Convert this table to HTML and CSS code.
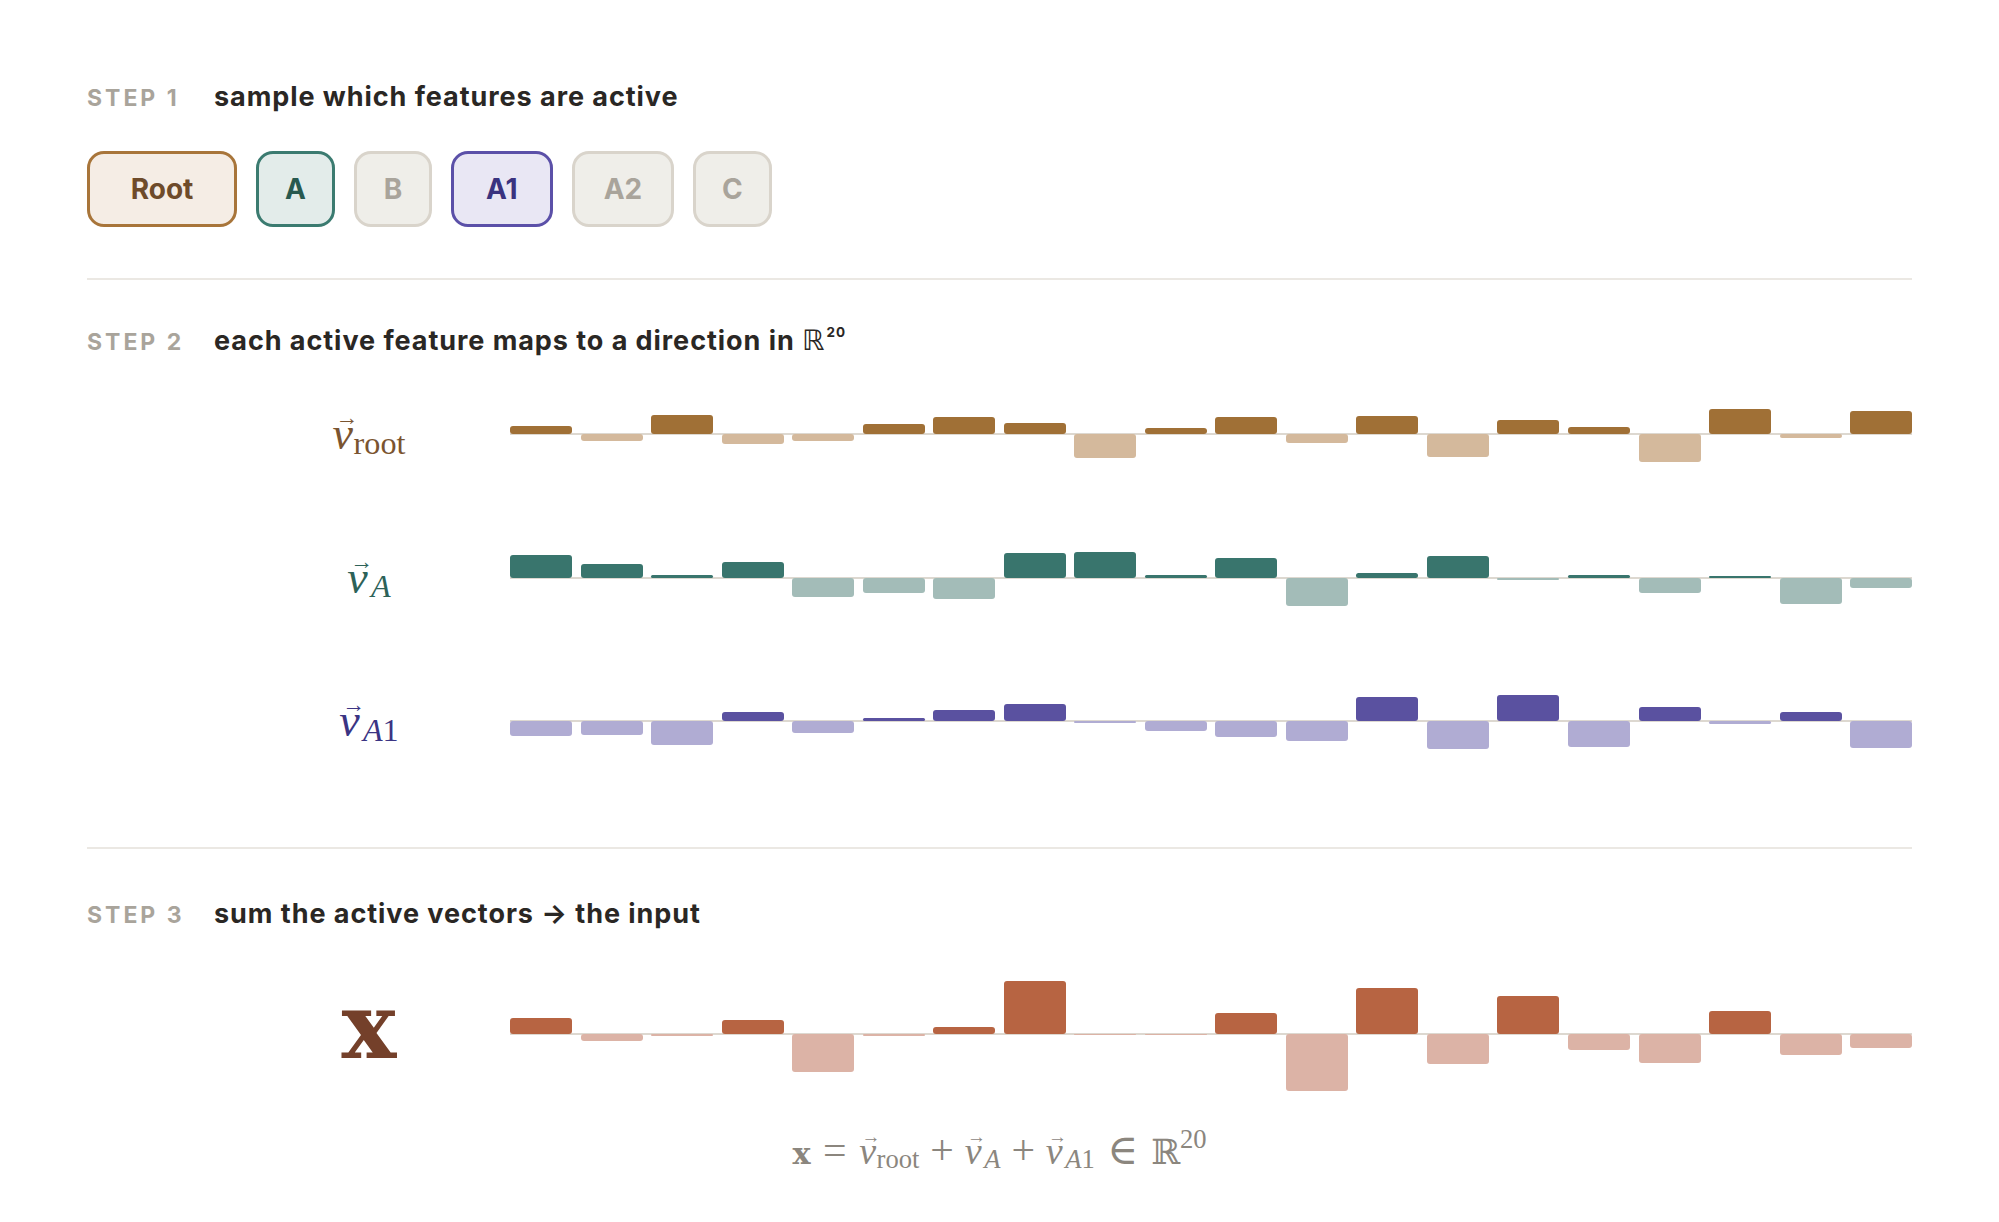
FILE: index.html
```html
<!DOCTYPE html>
<html lang="en">
<head>
<meta charset="utf-8">
<title>Feature sampling</title>
<link rel="stylesheet" href="styles.css">
</head>
<body>
<main class="page">
  <section class="step step-1">
    <h2 class="step-head"><span class="step-num">STEP 1</span><span class="step-title">sample which features are active</span></h2>
    <div class="chips">
      <span class="chip chip-wide chip-root">Root</span>
      <span class="chip chip-a">A</span>
      <span class="chip chip-off">B</span>
      <span class="chip chip-mid chip-a1">A1</span>
      <span class="chip chip-mid chip-off">A2</span>
      <span class="chip chip-off">C</span>
    </div>
  </section>

  <section class="step step-2">
    <h2 class="step-head"><span class="step-num">STEP 2</span><span class="step-title">each active feature maps to a direction in <span class="bb-sans">ℝ</span><sup>20</sup></span></h2>
    <div class="rows">
      <div class="row c-root">
        <div class="lab math"><span class="vec">v</span><sub>root</sub></div>
        <div class="bars">
          <div class="slot"><i class="up" style="height:8.3px"></i></div>
          <div class="slot"><i class="dn" style="height:7px"></i></div>
          <div class="slot"><i class="up" style="height:18.7px"></i></div>
          <div class="slot"><i class="dn" style="height:10.3px"></i></div>
          <div class="slot"><i class="dn" style="height:6.7px"></i></div>
          <div class="slot"><i class="up" style="height:10px"></i></div>
          <div class="slot"><i class="up" style="height:17.3px"></i></div>
          <div class="slot"><i class="up" style="height:11.3px"></i></div>
          <div class="slot"><i class="dn" style="height:24px"></i></div>
          <div class="slot"><i class="up" style="height:6.3px"></i></div>
          <div class="slot"><i class="up" style="height:17.3px"></i></div>
          <div class="slot"><i class="dn" style="height:9px"></i></div>
          <div class="slot"><i class="up" style="height:17.7px"></i></div>
          <div class="slot"><i class="dn" style="height:23.3px"></i></div>
          <div class="slot"><i class="up" style="height:13.7px"></i></div>
          <div class="slot"><i class="up" style="height:7.3px"></i></div>
          <div class="slot"><i class="dn" style="height:27.7px"></i></div>
          <div class="slot"><i class="up" style="height:25px"></i></div>
          <div class="slot"><i class="dn" style="height:3.7px"></i></div>
          <div class="slot"><i class="up" style="height:22.7px"></i></div>
        </div>
      </div>

      <div class="row c-a">
        <div class="lab math"><span class="vec">v</span><sub><i>A</i></sub></div>
        <div class="bars">
          <div class="slot"><i class="up" style="height:22.3px"></i></div>
          <div class="slot"><i class="up" style="height:14px"></i></div>
          <div class="slot"><i class="up" style="height:2.7px"></i></div>
          <div class="slot"><i class="up" style="height:15.3px"></i></div>
          <div class="slot"><i class="dn" style="height:19.7px"></i></div>
          <div class="slot"><i class="dn" style="height:15px"></i></div>
          <div class="slot"><i class="dn" style="height:21.7px"></i></div>
          <div class="slot"><i class="up" style="height:24.3px"></i></div>
          <div class="slot"><i class="up" style="height:25.3px"></i></div>
          <div class="slot"><i class="up" style="height:3px"></i></div>
          <div class="slot"><i class="up" style="height:20px"></i></div>
          <div class="slot"><i class="dn" style="height:28.3px"></i></div>
          <div class="slot"><i class="up" style="height:4.3px"></i></div>
          <div class="slot"><i class="up" style="height:21.7px"></i></div>
          <div class="slot"><i class="dn" style="height:2.3px"></i></div>
          <div class="slot"><i class="up" style="height:3px"></i></div>
          <div class="slot"><i class="dn" style="height:15.3px"></i></div>
          <div class="slot"><i class="up" style="height:1.7px"></i></div>
          <div class="slot"><i class="dn" style="height:26px"></i></div>
          <div class="slot"><i class="dn" style="height:10px"></i></div>
        </div>
      </div>

      <div class="row c-a1">
        <div class="lab math"><span class="vec">v</span><sub><i>A</i>1</sub></div>
        <div class="bars">
          <div class="slot"><i class="dn" style="height:15px"></i></div>
          <div class="slot"><i class="dn" style="height:14.3px"></i></div>
          <div class="slot"><i class="dn" style="height:23.7px"></i></div>
          <div class="slot"><i class="up" style="height:9.3px"></i></div>
          <div class="slot"><i class="dn" style="height:11.7px"></i></div>
          <div class="slot"><i class="up" style="height:2.7px"></i></div>
          <div class="slot"><i class="up" style="height:11px"></i></div>
          <div class="slot"><i class="up" style="height:17px"></i></div>
          <div class="slot"><i class="dn" style="height:2.3px"></i></div>
          <div class="slot"><i class="dn" style="height:10px"></i></div>
          <div class="slot"><i class="dn" style="height:16px"></i></div>
          <div class="slot"><i class="dn" style="height:19.7px"></i></div>
          <div class="slot"><i class="up" style="height:24px"></i></div>
          <div class="slot"><i class="dn" style="height:28px"></i></div>
          <div class="slot"><i class="up" style="height:26px"></i></div>
          <div class="slot"><i class="dn" style="height:26.3px"></i></div>
          <div class="slot"><i class="up" style="height:14px"></i></div>
          <div class="slot"><i class="dn" style="height:3px"></i></div>
          <div class="slot"><i class="up" style="height:8.7px"></i></div>
          <div class="slot"><i class="dn" style="height:27px"></i></div>
        </div>
      </div>
    </div>
  </section>

  <section class="step step-3">
    <h2 class="step-head"><span class="step-num">STEP 3</span><span class="step-title">sum the active vectors → the input</span></h2>
    <div class="row row-x c-x">
      <div class="lab bold-x">x</div>
      <div class="bars">
        <div class="slot"><i class="up" style="height:15.6px"></i></div>
        <div class="slot"><i class="dn" style="height:7.3px"></i></div>
        <div class="slot"><i class="dn" style="height:2.3px"></i></div>
        <div class="slot"><i class="up" style="height:14.3px"></i></div>
        <div class="slot"><i class="dn" style="height:38.1px"></i></div>
        <div class="slot"><i class="dn" style="height:2.3px"></i></div>
        <div class="slot"><i class="up" style="height:6.6px"></i></div>
        <div class="slot"><i class="up" style="height:52.6px"></i></div>
        <div class="slot"><i class="dn" style="height:1.2px"></i></div>
        <div class="slot"><i class="dn" style="height:1px"></i></div>
        <div class="slot"><i class="up" style="height:21.3px"></i></div>
        <div class="slot"><i class="dn" style="height:57px"></i></div>
        <div class="slot"><i class="up" style="height:46px"></i></div>
        <div class="slot"><i class="dn" style="height:29.6px"></i></div>
        <div class="slot"><i class="up" style="height:38.4px"></i></div>
        <div class="slot"><i class="dn" style="height:16px"></i></div>
        <div class="slot"><i class="dn" style="height:29px"></i></div>
        <div class="slot"><i class="up" style="height:22.8px"></i></div>
        <div class="slot"><i class="dn" style="height:21.3px"></i></div>
        <div class="slot"><i class="dn" style="height:14.3px"></i></div>
      </div>
    </div>
    <p class="formula math"><b class="fx">x</b><span class="op">=</span><span class="vec">v</span><sub>root</sub><span class="op op-m">+</span><span class="vec">v</span><sub><i>A</i></sub><span class="op op-m">+</span><span class="vec">v</span><sub><i>A</i>1</sub><span class="op">∈</span><span class="bb">ℝ</span><sup>20</sup></p>
  </section>
</main>
</body>
</html>
```

FILE: styles.css
```css
* { box-sizing: border-box; }

html, body {
  margin: 0;
  padding: 0;
  background: #ffffff;
}

body {
  font-family: Inter, "Noto Sans", "Liberation Sans", sans-serif;
  color: #2a2724;
}

.page {
  padding: 82px 87px 0 87px;
}

/* ---------- sections ---------- */
.step-1 {
  padding-bottom: 51px;
  border-bottom: 2px solid #ebe8e3;
}

.step-2 {
  padding-top: 46px;
  padding-bottom: 71px;
  border-bottom: 2px solid #ebe8e3;
}

.step-3 {
  padding-top: 50px;
}

/* ---------- headings ---------- */
.step-head {
  margin: 0;
  display: flex;
  align-items: baseline;
  height: 30px;
  line-height: 30px;
  font-weight: 600;
}

.step-num {
  width: 127px;
  flex: none;
  font-size: 23px;
  font-weight: 700;
  letter-spacing: 0.13em;
  color: #a9a49b;
}

.step-title {
  font-size: 27px;
  font-weight: 700;
  letter-spacing: 0.035em;
  color: #2a2724;
}

.step-title .bb-sans {
  font-family: "DejaVu Sans", sans-serif;
  font-weight: 400;
  font-size: 1.05em;
}

.step-title sup {
  font-size: 0.5em;
  vertical-align: 0.95em;
  line-height: 0;
  margin-left: 1px;
}

/* ---------- chips ---------- */
.chips {
  margin-top: 39px;
  display: flex;
  gap: 19px;
}

.chip {
  height: 76px;
  min-width: 78px;
  padding: 0 26px;
  display: flex;
  align-items: center;
  justify-content: center;
  border: 3px solid #d9d4cb;
  border-radius: 17px;
  background: #efeee9;
  color: #a9a49b;
  font-size: 28px;
  font-weight: 700;
}

.chip-wide { width: 150px; }
.chip-mid { width: 102px; }

.chip-root {
  background: #f5ede5;
  border-color: #a8753a;
  color: #6e4b2a;
}

.chip-a {
  background: #e3ecea;
  border-color: #3b7b70;
  color: #28594f;
}

.chip-a1 {
  background: #e9e7f4;
  border-color: #5b50a8;
  color: #3a337f;
}

/* ---------- vector rows ---------- */
.rows {
  margin-top: 23px;
  display: flex;
  flex-direction: column;
  gap: 33.5px;
}

.row {
  display: grid;
  grid-template-columns: 423px 1fr;
  height: 110px;
  align-items: center;
}

.row-x {
  height: 130px;
  margin-top: 40px;
}

.lab {
  width: 282px;
  justify-self: end;
  text-align: center;
  white-space: nowrap;
}

.bars {
  height: 100%;
  display: flex;
  gap: 8.5px;
  background: linear-gradient(to bottom,
    transparent calc(50% - 1px),
    #ddd8d0 calc(50% - 1px),
    #ddd8d0 calc(50% + 1px),
    transparent calc(50% + 1px));
}

.slot {
  flex: 1;
  display: grid;
  grid-template-rows: 1fr 1fr;
}

.slot i {
  display: block;
  border-radius: 3px;
}

.slot .up {
  grid-row: 1;
  align-self: end;
}

.slot .dn {
  grid-row: 2;
  align-self: start;
}

.c-root .up { background: #a07036; }
.c-root .dn { background: #d4b99c; }
.c-root .lab { color: #7a5430; }

.c-a .up { background: #39756d; }
.c-a .dn { background: #a3bcb8; }
.c-a .lab { color: #2d6258; }

.c-a1 .up { background: #5a51a0; }
.c-a1 .dn { background: #b0acd3; }
.c-a1 .lab { color: #3b3483; }

.c-x .up { background: #b76442; }
.c-x .dn { background: #dcb3a6; }

/* ---------- math ---------- */
.math {
  font-family: "Liberation Serif", "DejaVu Serif", serif;
  font-size: 46px;
  line-height: 1;
}

.vec {
  position: relative;
  display: inline-block;
  font-style: italic;
}

.vec::before {
  content: "\2192";
  position: absolute;
  left: 0.12em;
  top: -0.2em;
  font-size: 0.5em;
  font-style: normal;
  line-height: 1;
}

.math sub {
  font-size: 0.7em;
  vertical-align: -0.15em;
  line-height: 0;
  margin-left: 0.02em;
}

.math sub i {
  font-style: italic;
  margin-left: 0.08em;
}

.bold-x {
  font-family: "DejaVu Serif", "Liberation Serif", serif;
  font-weight: 700;
  font-size: 92px;
  line-height: 1;
  color: #74402a;
  margin-bottom: 16px;
}

.formula {
  margin: 31px 0 0 0;
  text-align: center;
  font-size: 38px;
  line-height: 40px;
  color: #8b867e;
}

.formula .fx {
  font-family: "DejaVu Serif", "Liberation Serif", serif;
  font-weight: 700;
  font-size: 0.8em;
}

.formula .op {
  margin: 0 0.3em;
  font-style: normal;
  font-size: 1.1em;
}

.formula .op-m {
  margin: 0 0.26em;
}

.formula .bb {
  font-family: "DejaVu Serif", serif;
  font-size: 0.92em;
}

.formula sup {
  font-size: 0.7em;
  vertical-align: 0.6em;
  line-height: 0;
}
```
